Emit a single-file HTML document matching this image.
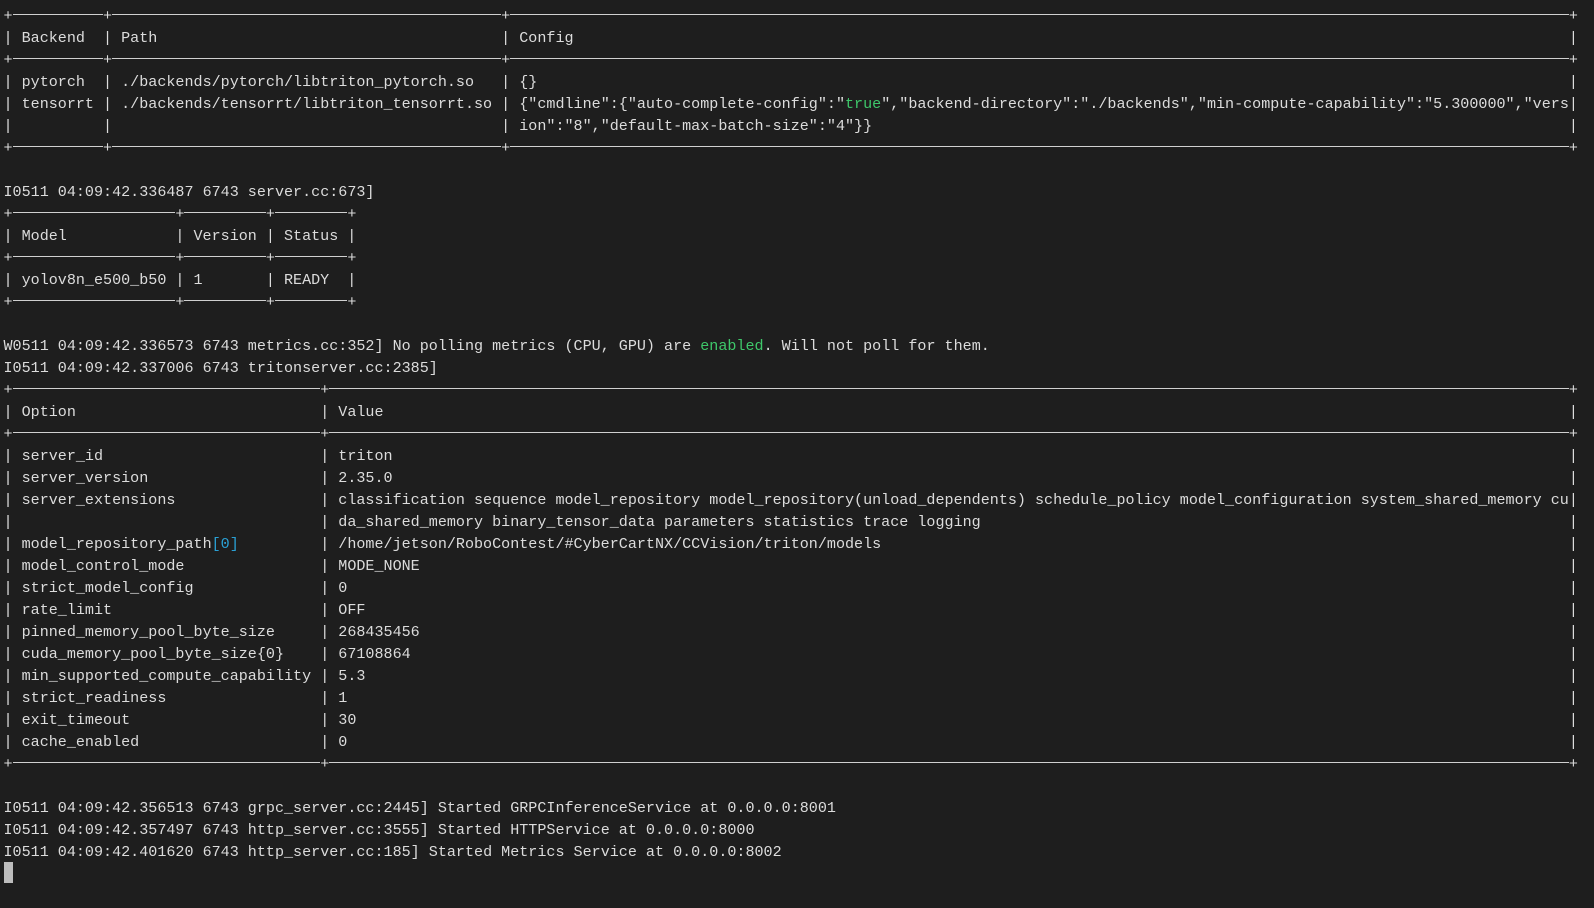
<!DOCTYPE html>
<html><head><meta charset="utf-8"><style>
html,body{margin:0;padding:0;background:#1e1e1e;width:1594px;height:908px;overflow:hidden}
#t{position:absolute;left:3.5px;top:4.5px;font-family:"Liberation Mono","DejaVu Sans Mono",monospace;font-size:15.08px;line-height:22px;color:#dcdcdc}
.l{height:22px;white-space:pre}
.c{display:inline-block;white-space:pre;overflow:hidden;vertical-align:top}
b{display:inline-block;height:1px;background:#d0d0d0;vertical-align:middle;position:relative;top:-1px}
.g{color:#3ec76a}.u{color:#2aa0d4}
.cur{position:absolute;left:4px;top:862px;width:9px;height:21px;background:#bdbdbd}
</style></head><body><div id="t"><div class="l">+<b style="width:10ch"></b>+<b style="width:43ch"></b>+<b style="width:117ch"></b>+</div><div class="l"><span class="c" style="width:11ch">| Backend</span><span class="c" style="width:44ch">| Path</span><span class="c" style="width:118ch">| Config</span>|</div><div class="l">+<b style="width:10ch"></b>+<b style="width:43ch"></b>+<b style="width:117ch"></b>+</div><div class="l"><span class="c" style="width:11ch">| pytorch</span><span class="c" style="width:44ch">| ./backends/pytorch/libtriton_pytorch.so</span><span class="c" style="width:118ch">| {}</span>|</div><div class="l"><span class="c" style="width:11ch">| tensorrt</span><span class="c" style="width:44ch">| ./backends/tensorrt/libtriton_tensorrt.so</span><span class="c" style="width:118ch">| {"cmdline":{"auto-complete-config":"<span class="g">true</span>","backend-directory":"./backends","min-compute-capability":"5.300000","vers</span>|</div><div class="l"><span class="c" style="width:11ch">|</span><span class="c" style="width:44ch">|</span><span class="c" style="width:118ch">| ion":"8","default-max-batch-size":"4"}}</span>|</div><div class="l">+<b style="width:10ch"></b>+<b style="width:43ch"></b>+<b style="width:117ch"></b>+</div><div class="l"></div><div class="l">I0511 04:09:42.336487 6743 server.cc:673]</div><div class="l">+<b style="width:18ch"></b>+<b style="width:9ch"></b>+<b style="width:8ch"></b>+</div><div class="l"><span class="c" style="width:19ch">| Model</span><span class="c" style="width:10ch">| Version</span><span class="c" style="width:9ch">| Status</span>|</div><div class="l">+<b style="width:18ch"></b>+<b style="width:9ch"></b>+<b style="width:8ch"></b>+</div><div class="l"><span class="c" style="width:19ch">| yolov8n_e500_b50</span><span class="c" style="width:10ch">| 1</span><span class="c" style="width:9ch">| READY</span>|</div><div class="l">+<b style="width:18ch"></b>+<b style="width:9ch"></b>+<b style="width:8ch"></b>+</div><div class="l"></div><div class="l">W0511 04:09:42.336573 6743 metrics.cc:352] No polling metrics (CPU, GPU) are <span class="g">enabled</span>. Will not poll for them.</div><div class="l">I0511 04:09:42.337006 6743 tritonserver.cc:2385]</div><div class="l">+<b style="width:34ch"></b>+<b style="width:137ch"></b>+</div><div class="l"><span class="c" style="width:35ch">| Option</span><span class="c" style="width:138ch">| Value</span>|</div><div class="l">+<b style="width:34ch"></b>+<b style="width:137ch"></b>+</div><div class="l"><span class="c" style="width:35ch">| server_id</span><span class="c" style="width:138ch">| triton</span>|</div><div class="l"><span class="c" style="width:35ch">| server_version</span><span class="c" style="width:138ch">| 2.35.0</span>|</div><div class="l"><span class="c" style="width:35ch">| server_extensions</span><span class="c" style="width:138ch">| classification sequence model_repository model_repository(unload_dependents) schedule_policy model_configuration system_shared_memory cu</span>|</div><div class="l"><span class="c" style="width:35ch">|</span><span class="c" style="width:138ch">| da_shared_memory binary_tensor_data parameters statistics trace logging</span>|</div><div class="l"><span class="c" style="width:35ch">| model_repository_path<span class="u">[0]</span></span><span class="c" style="width:138ch">| /home/jetson/RoboContest/#CyberCartNX/CCVision/triton/models</span>|</div><div class="l"><span class="c" style="width:35ch">| model_control_mode</span><span class="c" style="width:138ch">| MODE_NONE</span>|</div><div class="l"><span class="c" style="width:35ch">| strict_model_config</span><span class="c" style="width:138ch">| 0</span>|</div><div class="l"><span class="c" style="width:35ch">| rate_limit</span><span class="c" style="width:138ch">| OFF</span>|</div><div class="l"><span class="c" style="width:35ch">| pinned_memory_pool_byte_size</span><span class="c" style="width:138ch">| 268435456</span>|</div><div class="l"><span class="c" style="width:35ch">| cuda_memory_pool_byte_size{0}</span><span class="c" style="width:138ch">| 67108864</span>|</div><div class="l"><span class="c" style="width:35ch">| min_supported_compute_capability</span><span class="c" style="width:138ch">| 5.3</span>|</div><div class="l"><span class="c" style="width:35ch">| strict_readiness</span><span class="c" style="width:138ch">| 1</span>|</div><div class="l"><span class="c" style="width:35ch">| exit_timeout</span><span class="c" style="width:138ch">| 30</span>|</div><div class="l"><span class="c" style="width:35ch">| cache_enabled</span><span class="c" style="width:138ch">| 0</span>|</div><div class="l">+<b style="width:34ch"></b>+<b style="width:137ch"></b>+</div><div class="l"></div><div class="l">I0511 04:09:42.356513 6743 grpc_server.cc:2445] Started GRPCInferenceService at 0.0.0.0:8001</div><div class="l">I0511 04:09:42.357497 6743 http_server.cc:3555] Started HTTPService at 0.0.0.0:8000</div><div class="l">I0511 04:09:42.401620 6743 http_server.cc:185] Started Metrics Service at 0.0.0.0:8002</div></div><div class="cur"></div></body></html>
